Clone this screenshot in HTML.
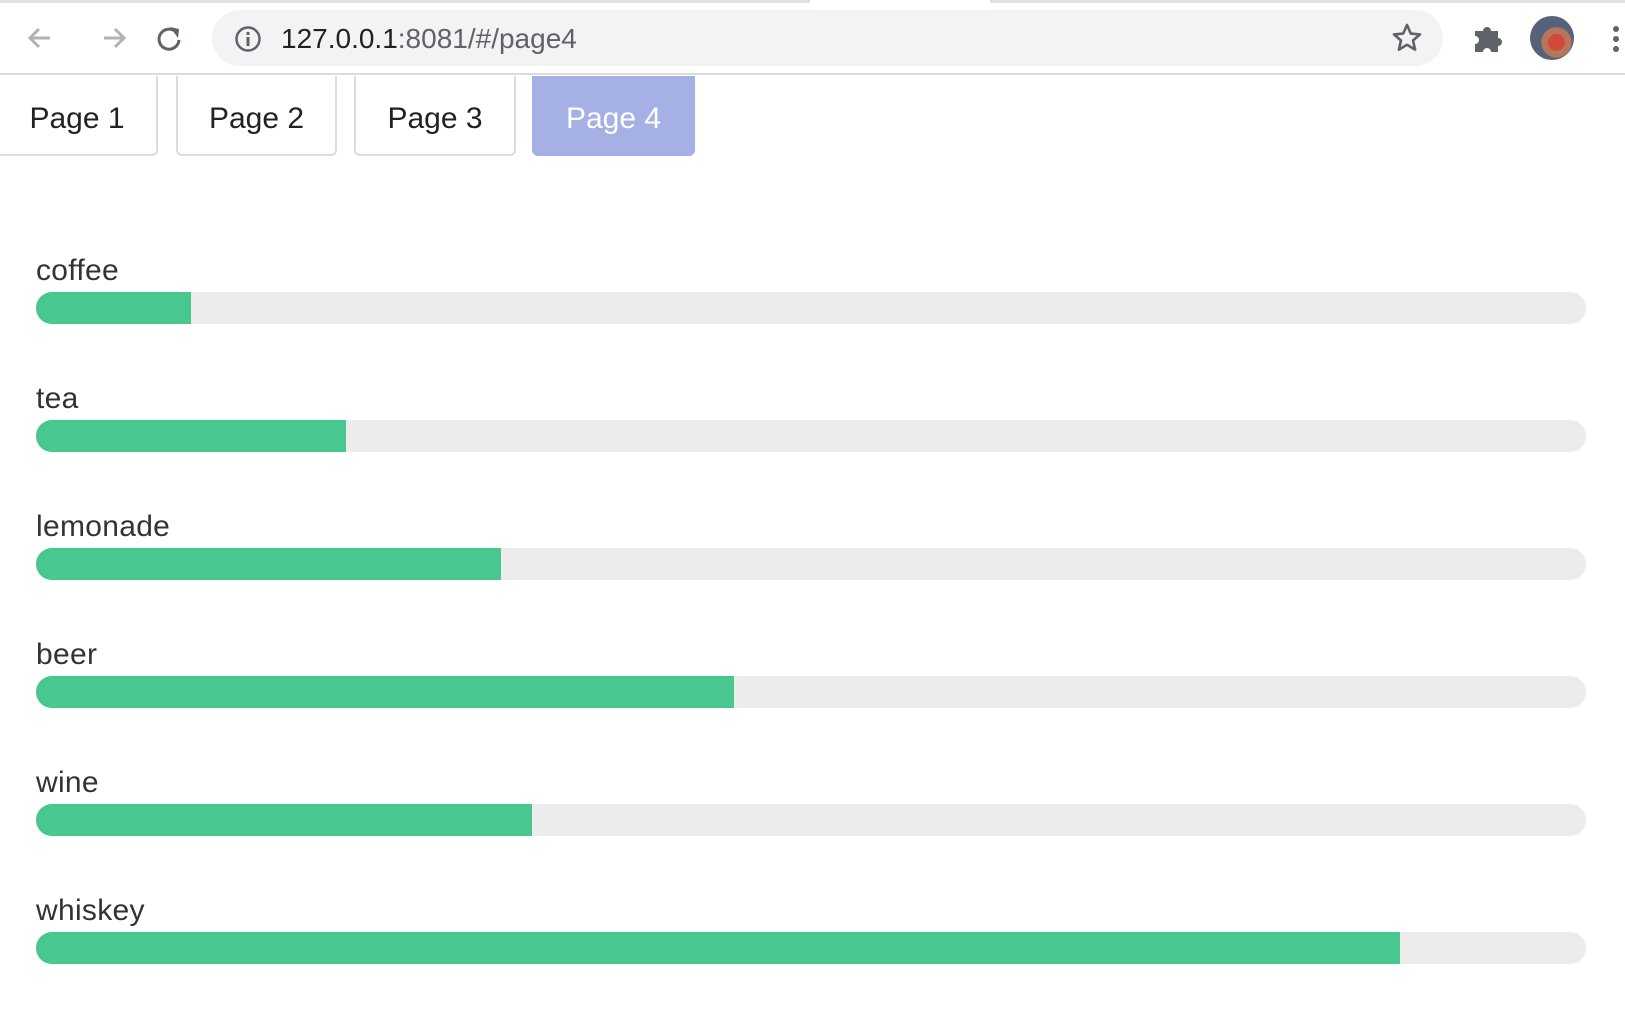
<!DOCTYPE html>
<html><head><meta charset="utf-8"><style>
body{margin:0;width:1625px;height:1036px;overflow:hidden;background:#fff;font-family:"Liberation Sans",sans-serif;position:relative}
.abs{position:absolute}
.tab{position:absolute;top:76px;height:80px;border:2px solid #dcdcdc;border-top:none;border-radius:0 0 6px 6px;box-sizing:border-box;font-size:30px;color:#222;display:flex;align-items:center;justify-content:center;padding-top:8px}
.lbl{position:absolute;left:36px;font-size:30px;color:#333;letter-spacing:0.3px}
.bar{position:absolute;left:36px;width:1550px;height:32px;border-radius:16px;background:#ececec;overflow:hidden}
.bar i{display:block;height:100%;background:#48c78e}
</style></head><body>
<div class="abs" style="left:0;top:0;width:810px;height:3px;background:#dee1e6"></div>
<div class="abs" style="left:990px;top:0;width:635px;height:3px;background:#dee1e6"></div>
<div class="abs" style="left:0;top:73px;width:1625px;height:2px;background:#dadce0"></div>
<svg class="abs" style="left:22px;top:22px" width="200" height="34" viewBox="0 0 200 34">
<path d="M28 16H8M17 7l-9 9 9 9" stroke="#b0b3b6" stroke-width="3" fill="none"/>
<path d="M82 16h20M93 7l9 9-9 9" stroke="#b0b3b6" stroke-width="3" fill="none"/>
<path d="M154 10a10 10 0 1 0 3 8" stroke="#5f6368" stroke-width="3" fill="none"/><path d="M148 5l9 2-1 9z" fill="#5f6368"/>
</svg>
<div class="abs" style="left:212px;top:10px;width:1231px;height:56px;border-radius:28px;background:#f1f3f4"></div>
<svg class="abs" style="left:234px;top:25px" width="28" height="28"><circle cx="14" cy="14" r="11.5" stroke="#5f6368" stroke-width="2.5" fill="none"/><rect x="12.5" y="12" width="3" height="9" fill="#5f6368"/><rect x="12.5" y="7" width="3" height="3" fill="#5f6368"/></svg>
<div class="abs" style="left:281px;top:23px;font-size:28px;color:#202124">127.0.0.1<span style="color:#5f6368">:8081/#/page4</span></div>
<svg class="abs" style="left:1391px;top:22px" width="32" height="32" viewBox="0 0 32 32"><path d="M16 3l3.8 8.6 9.2.8-7 6.1 2.1 9.1L16 22.8l-8.1 4.8 2.1-9.1-7-6.1 9.2-.8z" stroke="#5f6368" stroke-width="2.6" fill="none" stroke-linejoin="round"/></svg>
<svg class="abs" style="left:1473px;top:23px" width="32" height="30" viewBox="0 0 32 30"><path d="M2 8h8a4 4 0 1 1 8 0h7v7a4 4 0 1 1 0 8v6H18a4 4 0 1 0-8 0H2v-8a4 4 0 1 0 0-8z" fill="#5f6368"/></svg>
<div class="abs" style="left:1530px;top:16px;width:44px;height:44px;border-radius:50%;background:radial-gradient(circle at 60% 60%,#d2483a 0 22%,#b5765a 23% 40%,#56627a 41%)"></div>
<div class="abs" style="left:1613px;top:26px;width:6px;height:6px;border-radius:3px;background:#5f6368;box-shadow:0 10px 0 #5f6368,0 20px 0 #5f6368"></div>
<div class="tab" style="left:-4px;width:162px">Page 1</div>
<div class="tab" style="left:176px;width:161px">Page 2</div>
<div class="tab" style="left:354px;width:162px">Page 3</div>
<div class="tab" style="left:532px;width:163px;background:#a5b1e4;border-color:#a5b1e4;color:#fff">Page 4</div>
<div class="lbl" style="top:254px">coffee</div><div class="bar" style="top:292px"><i style="width:155px"></i></div>
<div class="lbl" style="top:382px">tea</div><div class="bar" style="top:420px"><i style="width:310px"></i></div>
<div class="lbl" style="top:510px">lemonade</div><div class="bar" style="top:548px"><i style="width:465px"></i></div>
<div class="lbl" style="top:638px">beer</div><div class="bar" style="top:676px"><i style="width:698px"></i></div>
<div class="lbl" style="top:766px">wine</div><div class="bar" style="top:804px"><i style="width:496px"></i></div>
<div class="lbl" style="top:894px">whiskey</div><div class="bar" style="top:932px"><i style="width:1364px"></i></div>
</body></html>
